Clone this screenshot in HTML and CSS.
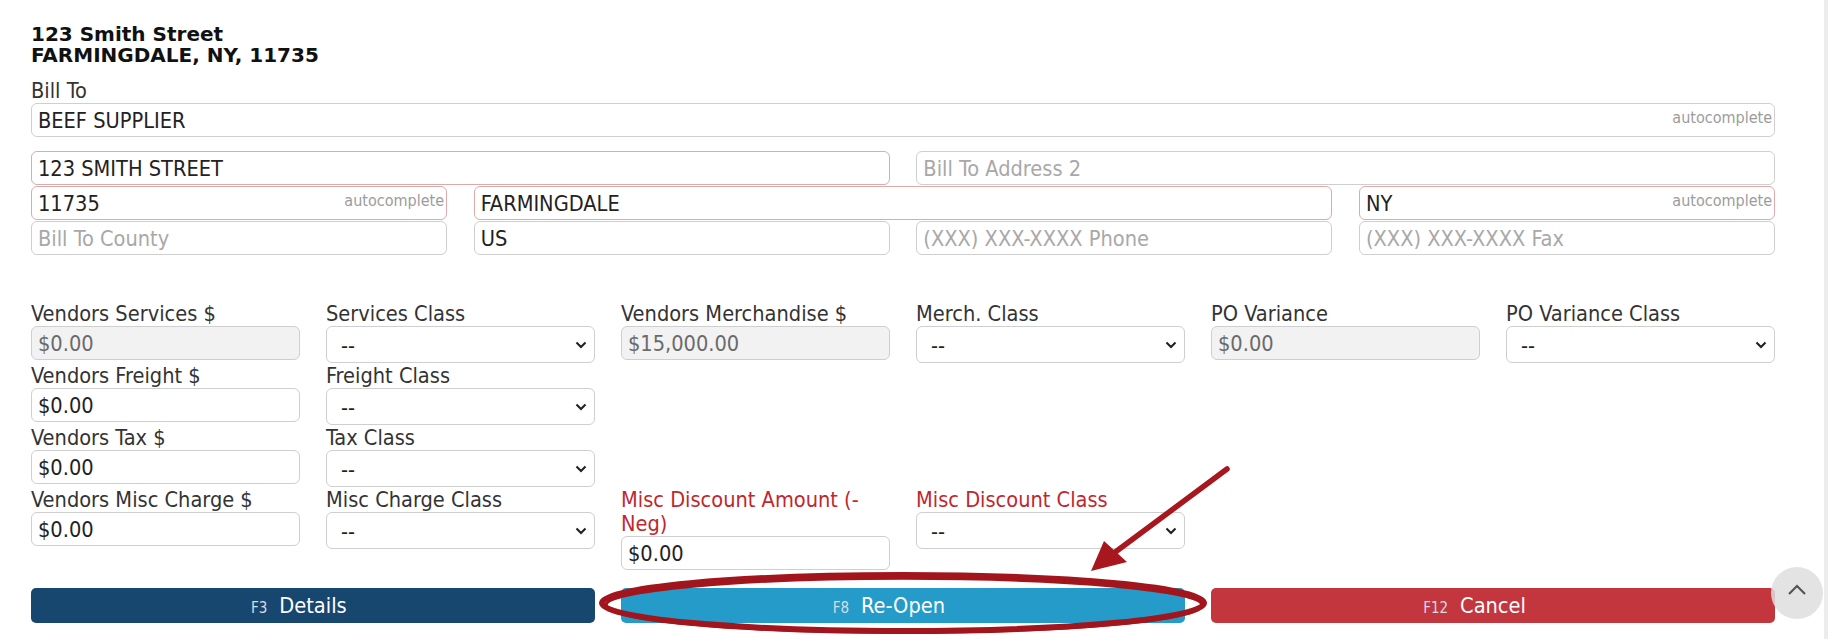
FILE: index.html
```html
<!DOCTYPE html>
<html>
<head>
<meta charset="utf-8">
<title>Vendor Invoice</title>
<link rel="stylesheet" href="styles.css">
</head>
<body>
<div class="page">
  <div class="title">123 Smith Street<br>FARMINGDALE, NY, 11735</div>

  <div class="lbl bill">Bill To</div>
  <div class="inp"><span class="val">BEEF SUPPLIER</span><span class="ac">autocomplete</span></div>

  <div class="addr-grid">
    <div class="inp err span2"><span class="val">123 SMITH STREET</span></div>
    <div class="inp span2"><span class="ph">Bill To Address 2</span></div>
    <div class="inp err"><span class="val">11735</span><span class="ac">autocomplete</span></div>
    <div class="inp err span2"><span class="val">FARMINGDALE</span></div>
    <div class="inp err"><span class="val">NY</span><span class="ac">autocomplete</span></div>
    <div class="inp"><span class="ph">Bill To County</span></div>
    <div class="inp"><span class="val">US</span></div>
    <div class="inp"><span class="ph">(XXX) XXX-XXXX Phone</span></div>
    <div class="inp"><span class="ph">(XXX) XXX-XXXX Fax</span></div>
  </div>

  <div class="amt-grid">
    <div class="fld">
      <div class="lbl">Vendors Services $</div>
      <div class="inp dis"><span class="val">$0.00</span></div>
    </div>
    <div class="fld">
      <div class="lbl">Services Class</div>
      <div class="sel"><span>--</span><svg class="chev" width="12" height="8" viewBox="0 0 12 8"><path d="M1.5 1.5 L6 6 L10.5 1.5" fill="none" stroke="#222" stroke-width="2.1"/></svg></div>
    </div>
    <div class="fld">
      <div class="lbl">Vendors Merchandise $</div>
      <div class="inp dis"><span class="val">$15,000.00</span></div>
    </div>
    <div class="fld">
      <div class="lbl">Merch. Class</div>
      <div class="sel"><span>--</span><svg class="chev" width="12" height="8" viewBox="0 0 12 8"><path d="M1.5 1.5 L6 6 L10.5 1.5" fill="none" stroke="#222" stroke-width="2.1"/></svg></div>
    </div>
    <div class="fld">
      <div class="lbl">PO Variance</div>
      <div class="inp dis"><span class="val">$0.00</span></div>
    </div>
    <div class="fld">
      <div class="lbl">PO Variance Class</div>
      <div class="sel"><span>--</span><svg class="chev" width="12" height="8" viewBox="0 0 12 8"><path d="M1.5 1.5 L6 6 L10.5 1.5" fill="none" stroke="#222" stroke-width="2.1"/></svg></div>
    </div>

    <div class="fld col1">
      <div class="lbl">Vendors Freight $</div>
      <div class="inp"><span class="val">$0.00</span></div>
    </div>
    <div class="fld">
      <div class="lbl">Freight Class</div>
      <div class="sel"><span>--</span><svg class="chev" width="12" height="8" viewBox="0 0 12 8"><path d="M1.5 1.5 L6 6 L10.5 1.5" fill="none" stroke="#222" stroke-width="2.1"/></svg></div>
    </div>

    <div class="fld col1">
      <div class="lbl">Vendors Tax $</div>
      <div class="inp"><span class="val">$0.00</span></div>
    </div>
    <div class="fld">
      <div class="lbl">Tax Class</div>
      <div class="sel"><span>--</span><svg class="chev" width="12" height="8" viewBox="0 0 12 8"><path d="M1.5 1.5 L6 6 L10.5 1.5" fill="none" stroke="#222" stroke-width="2.1"/></svg></div>
    </div>

    <div class="fld col1">
      <div class="lbl">Vendors Misc Charge $</div>
      <div class="inp"><span class="val">$0.00</span></div>
    </div>
    <div class="fld">
      <div class="lbl">Misc Charge Class</div>
      <div class="sel"><span>--</span><svg class="chev" width="12" height="8" viewBox="0 0 12 8"><path d="M1.5 1.5 L6 6 L10.5 1.5" fill="none" stroke="#222" stroke-width="2.1"/></svg></div>
    </div>
    <div class="fld">
      <div class="lbl red">Misc Discount Amount (-Neg)</div>
      <div class="inp"><span class="val">$0.00</span></div>
    </div>
    <div class="fld">
      <div class="lbl red">Misc Discount Class</div>
      <div class="sel"><span>--</span><svg class="chev" width="12" height="8" viewBox="0 0 12 8"><path d="M1.5 1.5 L6 6 L10.5 1.5" fill="none" stroke="#222" stroke-width="2.1"/></svg></div>
    </div>
  </div>

  <div class="btn-row">
    <div class="btn btn-details"><span class="btn-text"><span class="key">F3</span>Details</span></div>
    <div class="btn btn-reopen"><span class="btn-text"><span class="key">F8</span>Re-Open</span></div>
    <div class="btn btn-cancel"><span class="btn-text"><span class="key">F12</span>Cancel</span></div>
  </div>
</div>
<div class="scroll-edge"></div>

<div class="to-top"><svg width="20" height="12" viewBox="0 0 20 12"><path d="M2 10 L10 2 L18 10" fill="none" stroke="#555" stroke-width="2.2"/></svg></div>

<svg class="annot" width="1828" height="639" viewBox="0 0 1828 639">
  <ellipse cx="903" cy="603" rx="301" ry="28" fill="none" stroke="#a3151c" stroke-width="6"/>
  <ellipse cx="904" cy="605" rx="298" ry="27" fill="none" stroke="#a3151c" stroke-width="3.5"/>
  <line x1="1227" y1="469" x2="1110" y2="556" stroke="#a8161e" stroke-width="5.5" stroke-linecap="round"/>
  <polygon points="1091,571 1104,541 1127,562" fill="#a8161e"/>
</svg>
</body>
</html>
```

FILE: styles.css
```css
* {
  box-sizing: border-box;
}

html, body {
  margin: 0;
  padding: 0;
  background: #ffffff;
}

body {
  position: relative;
  display: flex;
  width: 1828px;
  height: 639px;
  overflow: hidden;
  font-family: "DejaVu Sans Condensed", "DejaVu Sans", sans-serif;
  font-size: 21.6px;
  color: #333333;
}

.page {
  flex: none;
  width: 1775px;
  padding: 24px 0 0 31px;
}

.title {
  font-family: "DejaVu Sans", sans-serif;
  font-weight: bold;
  font-size: 20px;
  line-height: 21px;
  color: #111111;
}

.lbl {
  line-height: 24px;
  color: #333333;
}

.lbl.red {
  color: #c1272d;
}

.bill {
  margin-top: 13px;
}

.inp {
  position: relative;
  display: flex;
  align-items: center;
  height: 34px;
  padding: 0 6px;
  border: 1px solid #cfcfcf;
  border-radius: 6px;
  background: #ffffff;
  color: #222222;
  white-space: nowrap;
  overflow: hidden;
}

.inp.err {
  border-color: #dcaaaa;
}

.inp.dis {
  background: #f2f2f2;
  color: #6a6a6a;
}

.ph {
  color: #a8a8a8;
}

.ac {
  position: absolute;
  right: 2px;
  top: 5px;
  font-size: 16px;
  line-height: 18px;
  color: #9c9c9c;
}

.addr-grid {
  margin-top: 14px;
  display: grid;
  grid-template-columns: repeat(4, 1fr);
  column-gap: 26.67px;
  row-gap: 1px;
  width: 1744px;
}

.span2 {
  grid-column: span 2;
}

.amt-grid {
  margin-top: 47px;
  display: grid;
  grid-template-columns: repeat(6, 269px);
  column-gap: 26px;
  row-gap: 1px;
  align-items: start;
}

.fld {
  display: flex;
  flex-direction: column;
}

.col1 {
  grid-column: 1;
}

.sel {
  display: flex;
  align-items: center;
  justify-content: space-between;
  height: 37px;
  padding: 2px 7px 0 14px;
  border: 1px solid #cfcfcf;
  border-radius: 6px;
  background: #ffffff;
  color: #222222;
}

.chev {
  display: block;
  margin-top: -2px;
}

.btn-row {
  margin-top: 18px;
  display: grid;
  grid-template-columns: repeat(3, 564px);
  column-gap: 26px;
}

.btn {
  display: flex;
  align-items: center;
  justify-content: center;
  height: 35px;
  border-radius: 5px;
  color: #ffffff;
}

.btn-details {
  background: #17466f;
}

.btn-reopen {
  background: #259bc9;
}

.btn-cancel {
  background: #c3363e;
}

.btn-text {
  position: relative;
  line-height: 24px;
}

.key {
  position: absolute;
  right: 100%;
  bottom: 1px;
  margin-right: 12px;
  font-size: 15px;
  line-height: 17px;
  color: #d6dde4;
}

.scroll-edge {
  margin-left: auto;
  width: 4px;
  align-self: stretch;
  background: #ececec;
}

.to-top {
  position: absolute;
  left: 1771px;
  top: 567px;
  width: 52px;
  height: 52px;
  border-radius: 50%;
  background: rgba(222, 222, 222, 0.85);
  display: flex;
  align-items: center;
  justify-content: center;
}

.to-top svg {
  display: block;
  margin-top: -6px;
}

.annot {
  position: absolute;
  left: 0;
  top: 0;
  pointer-events: none;
}
```
